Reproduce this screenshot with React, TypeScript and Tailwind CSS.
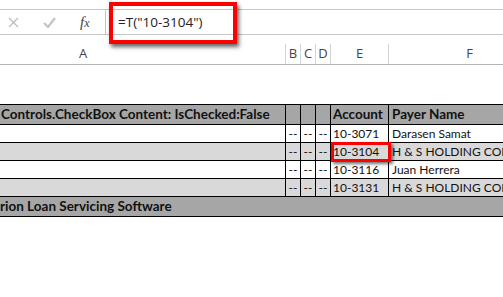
const rows = [
  { account: "10-3071", payer: "Darasen Samat", shade: false },
  { account: "10-3104", payer: "H & S HOLDING COMPANY", shade: true, marked: true },
  { account: "10-3116", payer: "Juan Herrera", shade: false },
  { account: "10-3131", payer: "H & S HOLDING COMPANY", shade: true },
];

const cell = "font-['Lato',sans-serif] text-[12px] text-[#111]";

export default function App() {
  return (
    <div className="relative h-[297px] w-[503px] overflow-hidden bg-white">
      {/* formula bar */}
      <div className="mt-[9px] flex h-[26px] border-y border-[#c6c6c6]">
        <div className="flex w-[106px] shrink-0 items-center border-r border-[#c6c6c6]">
          <svg className="ml-[8px]" width="11" height="11" viewBox="0 0 11 11">
            <path d="M1 1 L10 10 M10 1 L1 10" stroke="#bdbdbd" strokeWidth="1.3" fill="none" />
          </svg>
          <svg className="ml-[24px]" width="13" height="11" viewBox="0 0 13 11">
            <path d="M1 6 L5 10 L12 1" stroke="#c4c4c4" strokeWidth="2.2" fill="none" />
          </svg>
          <span className="ml-[24px] font-['Liberation_Serif',serif] text-[15px] italic leading-none text-[#444]">
            f<span className="text-[12px]">x</span>
          </span>
        </div>
        <div className="flex items-center pl-[12px] font-['Open_Sans',sans-serif] text-[13.5px] text-[#222]">
          =T("10-3104")
        </div>
      </div>

      {/* column headers */}
      <div className="flex h-[30px] items-end border-b border-[#b4b4b4] font-['Open_Sans',sans-serif] text-[13px] text-[#444]">
        <div className="flex h-[20px] w-[285px] shrink-0 items-center pl-[79px]">A</div>
        <div className="flex h-[20px] w-[15px] shrink-0 items-center justify-center border-l border-[#d4d4d4]">B</div>
        <div className="flex h-[20px] w-[15px] shrink-0 items-center justify-center border-l border-[#d4d4d4]">C</div>
        <div className="flex h-[20px] w-[15px] shrink-0 items-center justify-center border-l border-[#d4d4d4]">D</div>
        <div className="flex h-[20px] w-[58px] shrink-0 items-center justify-center border-l border-[#d4d4d4]">E</div>
        <div className="flex h-[20px] w-[162px] shrink-0 items-center justify-center border-l border-[#d4d4d4]">F</div>
      </div>

      {/* sheet */}
      <div className="mt-[39px]">
        <div className="flex h-[20px] border-t border-black bg-[#a6a6a6] font-['Lato',sans-serif] text-[13.5px] font-bold text-[#111]">
          <div className="flex w-[285px] shrink-0 items-center overflow-hidden whitespace-nowrap pl-[1px]">
            Controls.CheckBox Content: IsChecked:False
          </div>
          <div className="w-[15px] shrink-0 border-l border-black" />
          <div className="w-[15px] shrink-0 border-l border-black" />
          <div className="w-[15px] shrink-0 border-l border-black" />
          <div className="flex w-[58px] shrink-0 items-center border-l border-black pl-[2px]">Account</div>
          <div className="flex min-w-0 flex-1 items-center border-l border-black pl-[3px]">Payer Name</div>
        </div>
        {rows.map((r) => (
          <div
            key={r.account}
            className={`flex h-[18px] border-t border-black ${r.shade ? "bg-[#d9d9d9]" : "bg-white"} ${cell}`}
          >
            <div className="w-[285px] shrink-0" />
            <div className="flex w-[15px] shrink-0 items-center justify-center border-l border-black">--</div>
            <div className="flex w-[15px] shrink-0 items-center justify-center border-l border-black">--</div>
            <div className="flex w-[15px] shrink-0 items-center justify-center border-l border-black">--</div>
            <div className="relative flex w-[58px] shrink-0 items-center border-l border-black pl-[2px]">
              {r.account}
              {r.marked && (
                <div className="absolute left-[0px] top-[-1px] h-[20px] w-[60px] border-[3px] border-[#ff0000] shadow-[2px_2px_3px_rgba(0,0,0,0.55)]" />
              )}
            </div>
            <div className="flex min-w-0 flex-1 items-center overflow-hidden whitespace-nowrap border-l border-black pl-[3px]">
              {r.payer}
            </div>
          </div>
        ))}
        <div className="flex h-[21px] items-center overflow-hidden whitespace-nowrap border-y border-black bg-[#a6a6a6] font-['Lato',sans-serif] text-[13.5px] font-bold text-[#111]">
          rion Loan Servicing Software
        </div>
      </div>

      {/* highlight around formula */}
      <div className="absolute left-[109px] top-[2px] h-[42px] w-[128px] border-[4px] border-[#ff0000] shadow-[2px_3px_4px_rgba(0,0,0,0.6)]" />
    </div>
  );
}
